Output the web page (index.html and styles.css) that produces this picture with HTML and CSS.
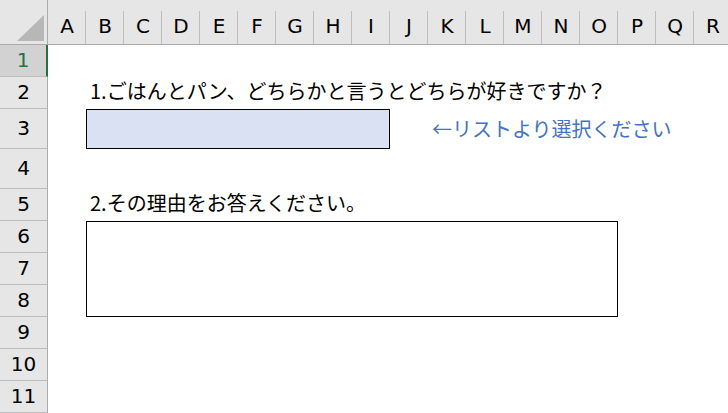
FILE: index.html
```html
<!DOCTYPE html>
<html lang="ja">
<head>
    <meta charset="UTF-8">
    <meta name="viewport" content="width=device-width, initial-scale=1.0">
    <title>アンケート</title>
    <link rel="stylesheet" href="styles.css">
</head>
<body>
    <div class="sheet">
        <div class="corner">
            <svg width="48" height="45" viewBox="0 0 48 45"><polygon points="17,41 44,41 44,15" fill="#b7b7b7"/></svg>
        </div>
        <div class="col-head">A</div>
        <div class="col-head">B</div>
        <div class="col-head">C</div>
        <div class="col-head">D</div>
        <div class="col-head">E</div>
        <div class="col-head">F</div>
        <div class="col-head">G</div>
        <div class="col-head">H</div>
        <div class="col-head">I</div>
        <div class="col-head">J</div>
        <div class="col-head">K</div>
        <div class="col-head">L</div>
        <div class="col-head">M</div>
        <div class="col-head">N</div>
        <div class="col-head">O</div>
        <div class="col-head">P</div>
        <div class="col-head">Q</div>
        <div class="col-head">R</div>

        <div class="row-head selected">1</div>
        <div class="row-head">2</div>
        <div class="row-head">3</div>
        <div class="row-head">4</div>
        <div class="row-head">5</div>
        <div class="row-head">6</div>
        <div class="row-head">7</div>
        <div class="row-head">8</div>
        <div class="row-head">9</div>
        <div class="row-head">10</div>
        <div class="row-head">11</div>

        <div class="label q1">1.ごはんとパン、どちらかと言うとどちらが好きですか？</div>
        <div class="choice"></div>
        <div class="hint">←リストより選択ください</div>
        <div class="label q2">2.その理由をお答えください。</div>
        <div class="answer"></div>
    </div>
</body>
</html>
```

FILE: styles.css
```css
body {
    margin: 0;
    background-color: #fff;
    font-family: "Noto Sans CJK JP", sans-serif;
    color: #000;
    overflow: hidden;
}
.sheet {
    display: grid;
    grid-template-columns: 48px repeat(18, 38px);
    grid-template-rows: 45px 32px 32px 40px 40px 32px repeat(6, 32px);
    width: 728px;
    height: 413px;
    overflow: hidden;
}
.corner {
    grid-row: 1;
    grid-column: 1;
    background-color: #e6e6e6;
    border-bottom: 1px solid #ababab;
    border-right: 1px solid #ababab;
    box-sizing: border-box;
}
.corner svg {
    display: block;
}
/* 見出しは Meiryo の英数字に近い DejaVu Sans */
.col-head {
    grid-row: 1;
    display: flex;
    align-items: center;
    justify-content: center;
    padding-top: 8px;
    box-sizing: border-box;
    font-family: "DejaVu Sans", sans-serif;
    font-size: 20px;
    background-color: #e6e6e6;
    background-image: linear-gradient(#bdbdbd, #bdbdbd);
    background-size: 1px 34px;
    background-position: right top 11px;
    background-repeat: no-repeat;
    border-bottom: 1px solid #ababab;
}
.row-head {
    grid-column: 1;
    display: flex;
    align-items: center;
    justify-content: center;
    padding-bottom: 2px;
    box-sizing: border-box;
    font-family: "DejaVu Sans", sans-serif;
    font-size: 20px;
    background-color: #e6e6e6;
    border-right: 1px solid #ababab;
    border-bottom: 1px solid #bdbdbd;
}
.row-head.selected {
    background-color: #d2d2d2;
    color: #217346;
    border-right: 2px solid #217346;
}
.label {
    align-self: end;
    padding: 0 0 5px 4px;
    font-size: 20px;
    line-height: 26px;
    white-space: nowrap;
}
.q1 {
    grid-column: 3 / 20;
    grid-row: 3;
}
.q2 {
    grid-column: 3 / 20;
    grid-row: 6;
}
.choice {
    grid-column: 3 / 11;
    grid-row: 4;
    background-color: #d9e1f2;
    border: 1px solid #000;
}
.hint {
    grid-column: 12 / 20;
    grid-row: 4;
    align-self: center;
    padding-left: 4px;
    font-size: 20px;
    line-height: 26px;
    white-space: nowrap;
    color: #4472c4;
}
.answer {
    grid-column: 3 / 17;
    grid-row: 7 / 10;
    border: 1px solid #000;
}
```
